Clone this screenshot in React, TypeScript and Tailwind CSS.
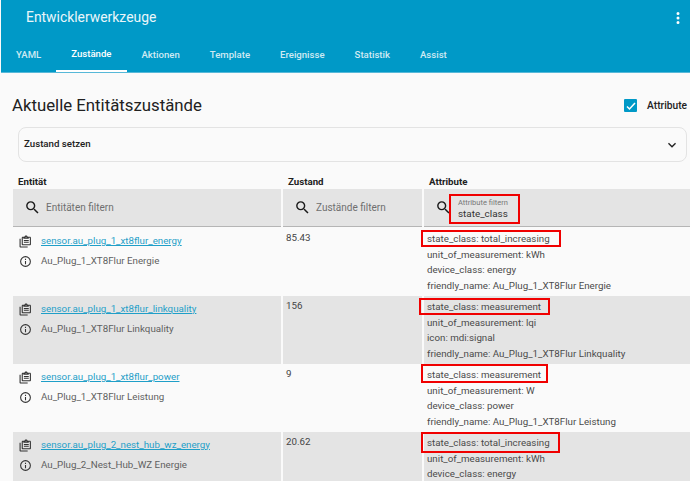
import React from 'react';

const magnify = 'M9.5,3A6.5,6.5 0 0,1 16,9.5C16,11.11 15.41,12.59 14.44,13.73L14.71,14H15.5L20.5,19L19,20.5L14,15.5V14.71L13.73,14.44C12.59,15.41 11.11,16 9.5,16A6.5,6.5 0 0,1 3,9.5A6.5,6.5 0 0,1 9.5,3M9.5,5C7,5 5,7 5,9.5C5,12 7,14 9.5,14C12,14 14,12 14,9.5C14,7 12,5 9.5,5Z';
const info = 'M11,9H13V7H11M12,20C7.59,20 4,16.41 4,12C4,7.59 7.59,4 12,4C16.41,4 20,7.59 20,12C20,16.41 16.41,20 12,20M12,2A10,10 0 0,0 2,12A10,10 0 0,0 12,22A10,10 0 0,0 22,12A10,10 0 0,0 12,2M11,17H13V11H11V17Z';
const clipboard = 'M3 7V21H16V23H3C1.9 23 1 22.1 1 21V7H3M20 3C21.1 3 22 3.9 22 5V17C22 18.1 21.1 19 20 19H7C5.9 19 5 18.1 5 17V5C5 3.9 5.9 3 7 3H10C10.4 1.8 11.5 1 13 1S15.6 1.8 16 3H20M13 3C12.5 3 12 3.5 12 4S12.5 5 13 5 14 4.5 14 4 13.5 3 13 3M20 17V5H18V7H8V5H7V17H20M9 9H18V11H9V9M9 12.5H18V14.5H9V12.5Z';

function Icon({ d, className }: { d: string; className: string }) {
  return (
    <svg viewBox="0 0 24 24" className={className} fill="currentColor">
      <path d={d} />
    </svg>
  );
}

const rows = [
  {
    id: 'sensor.au_plug_1_xt8flur_energy',
    name: 'Au_Plug_1_XT8Flur Energie',
    state: '85.43',
    attrs: ['state_class: total_increasing', 'unit_of_measurement: kWh', 'device_class: energy', 'friendly_name: Au_Plug_1_XT8Flur Energie'],
    box: 'left-[-3px] top-[2px] w-[140px] h-[17px]',
  },
  {
    id: 'sensor.au_plug_1_xt8flur_linkquality',
    name: 'Au_Plug_1_XT8Flur Linkquality',
    state: '156',
    attrs: ['state_class: measurement', 'unit_of_measurement: lqi', 'icon: mdi:signal', 'friendly_name: Au_Plug_1_XT8Flur Linkquality'],
    box: 'left-[-5px] top-[2px] w-[131px] h-[17px]',
  },
  {
    id: 'sensor.au_plug_1_xt8flur_power',
    name: 'Au_Plug_1_XT8Flur Leistung',
    state: '9',
    attrs: ['state_class: measurement', 'unit_of_measurement: W', 'device_class: power', 'friendly_name: Au_Plug_1_XT8Flur Leistung'],
    box: 'left-[-3px] top-0 w-[127px] h-[19px]',
  },
  {
    id: 'sensor.au_plug_2_nest_hub_wz_energy',
    name: 'Au_Plug_2_Nest_Hub_WZ Energie',
    state: '20.62',
    attrs: ['state_class: total_increasing', 'unit_of_measurement: kWh', 'device_class: energy'],
    box: 'left-[-3px] top-0 w-[139px] h-[21px]',
  },
];

const tabs = ['YAML', 'Zustände', 'Aktionen', 'Template', 'Ereignisse', 'Statistik', 'Assist'];

function Filter({ label }: { label: string }) {
  return (
    <div className="h-[38px] bg-[#e4e4e4] border-b border-[#b5b5b5] flex items-center pl-[11px] gap-[5px]">
      <Icon d={magnify} className="w-[17px] h-[17px] text-[#1a1a1a]" />
      <span className="text-[10px] text-[#6f6f6f]">{label}</span>
    </div>
  );
}

export default function App() {
  return (
    <div className="w-[690px] h-[481px] overflow-hidden bg-[#fafafa] pl-px font-['Roboto',sans-serif] text-[#212121]">
      {/* Header */}
      <header className="h-[73px] bg-[#0099c7] text-white border-b border-[#57b8d8]">
        <div className="h-[36px] pb-[1px] flex items-center justify-between pl-[25px] pr-[3px]">
          <span className="text-[13.9px] text-[#eaf6fa]">Entwicklerwerkzeuge</span>
          <svg viewBox="0 0 24 24" className="w-[18px] h-[18px]" fill="currentColor">
            <path d="M12,16A2,2 0 0,1 14,18A2,2 0 0,1 12,20A2,2 0 0,1 10,18A2,2 0 0,1 12,16M12,10A2,2 0 0,1 14,12A2,2 0 0,1 12,14A2,2 0 0,1 10,12A2,2 0 0,1 12,10M12,4A2,2 0 0,1 14,6A2,2 0 0,1 12,8A2,2 0 0,1 10,6A2,2 0 0,1 12,4Z" />
          </svg>
        </div>
        <nav className="h-[36px] flex">
          {tabs.map((tab) => (
            <div
              key={tab}
              className={
                tab === 'Zustände'
                  ? 'h-full flex items-center pt-[2px] px-[15px] text-[9.6px] font-medium text-white border-b-2 border-white'
                  : 'h-full flex items-center pt-[2px] px-[15px] text-[9.6px] font-medium text-[#cfeaf3]'
              }
            >
              {tab}
            </div>
          ))}
        </nav>
      </header>

      {/* Title row */}
      <div className="h-[54px] pt-[12px] flex items-center justify-between pl-[11px] pr-[3px]">
        <h1 className="text-[16.8px] font-normal">Aktuelle Entitätszustände</h1>
        <div className="flex items-center gap-[10px]">
          <span className="w-[13px] h-[13px] bg-[#0099c7] flex items-center justify-center rounded-[1px]">
            <svg viewBox="0 0 24 24" className="w-[12px] h-[12px] text-white" fill="none" stroke="currentColor" strokeWidth="3">
              <path d="M4 13l5 5L20 6" />
            </svg>
          </span>
          <span className="text-[10.2px] font-medium">Attribute</span>
        </div>
      </div>

      {/* Zustand setzen */}
      <div className="ml-[17px] mr-[3px] h-[35px] border border-[#e3e3e3] rounded-[8px] flex items-center justify-between pl-[5px] pr-[6px]">
        <span className="text-[9.7px] font-medium">Zustand setzen</span>
        <svg viewBox="0 0 24 24" className="w-[16px] h-[16px]" fill="currentColor">
          <path d="M7.41,8.58L12,13.17L16.59,8.58L18,10L12,16L6,10L7.41,8.58Z" />
        </svg>
      </div>

      {/* Table */}
      <div className="mt-[11px] ml-[12px] grid grid-cols-[268px_139px_266px] gap-x-[2px]">
        <div className="h-[16px] pl-[5px] text-[9.7px] font-bold leading-[17px]">Entität</div>
        <div className="h-[16px] pl-[5px] text-[9.7px] font-bold leading-[17px]">Zustand</div>
        <div className="h-[16px] pl-[5px] text-[9.7px] font-bold leading-[17px]">Attribute</div>

        <Filter label="Entitäten filtern" />
        <Filter label="Zustände filtern" />
        <div className="relative h-[38px] bg-[#e4e4e4] border-b border-[#b5b5b5] flex items-center pl-[11px] gap-[6px]">
          <Icon d={magnify} className="w-[17px] h-[17px] text-[#1a1a1a]" />
          <div className="pt-[3px]">
            <div className="text-[7.5px] leading-[9px] text-[#777777]">Attribute filtern</div>
            <div className="text-[9.9px] leading-[14px] text-[#333333]">state_class</div>
          </div>
          <div className="absolute left-[25px] top-[5px] w-[71px] h-[30px] border-2 border-[#f00000]" />
        </div>
      </div>

      <div className="mt-px ml-[12px] grid grid-cols-[268px_139px_266px] gap-x-[2px]">
        {rows.map((row, i) => {
          const bg = i % 2 === 1 ? 'bg-[#e4e4e4]' : 'bg-[#fafafa]';
          return (
            <React.Fragment key={row.id}>
              <div className={`h-[68px] pl-[6px] pt-[3px] ${bg}`}>
                <div className="flex items-center gap-[9px] h-[20px]">
                  <Icon d={clipboard} className="w-[13px] h-[13px] text-[#333333]" />
                  <span className="text-[9.75px] text-[#1f9fc8] underline">{row.id}</span>
                </div>
                <div className="flex items-center gap-[9px] h-[20px]">
                  <Icon d={info} className="w-[13px] h-[13px] text-[#333333]" />
                  <span className="text-[9.75px] text-[#5f5f5f]">{row.name}</span>
                </div>
              </div>
              <div className={`h-[68px] pl-[3px] pt-[3px] text-[9.75px] leading-[14px] text-[#444444] ${bg}`}>{row.state}</div>
              <div className={`relative h-[68px] pl-[3px] pt-[3px] text-[9.75px] leading-[15.7px] text-[#4a4a4a] ${bg}`}>
                {row.attrs.map((attr) => (
                  <div key={attr} className="whitespace-nowrap">{attr}</div>
                ))}
                <div className={`absolute border-2 border-[#f00000] ${row.box}`} />
              </div>
            </React.Fragment>
          );
        })}
      </div>
    </div>
  );
}
